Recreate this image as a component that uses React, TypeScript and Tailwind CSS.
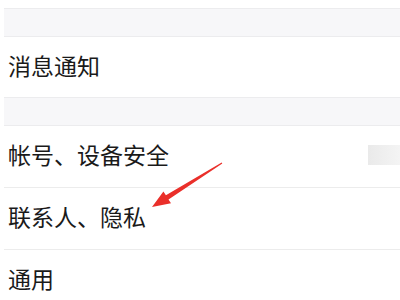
import React from "react";

const FONT = { fontFamily: '"Noto Sans CJK SC", "Noto Sans", sans-serif' };

function Row({ label, h, extra }: { label: string; h: string; extra?: React.ReactNode }) {
  return (
    <div className={`flex items-center justify-between bg-white pl-2 pb-1 ${h}`}>
      <span className="text-[23px] leading-none text-[#1a1a1a]">{label}</span>
      {extra}
    </div>
  );
}

export default function App() {
  return (
    <div className="relative w-[400px] h-[300px] overflow-hidden bg-white" style={FONT}>
      <div className="h-[8px] bg-white" />
      <div className="ml-1 h-[29px] border-y border-[#ececee] bg-[#f7f7f9]" />
      <Row label="消息通知" h="h-[60px]" />
      <div className="ml-1 h-[29px] border-y border-[#ececee] bg-[#f7f7f9]" />
      <Row
        label="帐号、设备安全"
        h="h-[61px]"
        extra={<div className="w-[32px] h-[20px] bg-gradient-to-r from-[#eaeaea] to-[#f4f4f4]" />}
      />
      <div className="ml-1 h-px bg-[#ececec]" />
      <Row label="联系人、隐私" h="h-[61px]" />
      <div className="ml-1 h-px bg-[#ececec]" />
      <Row label="通用" h="h-[60px]" />

      {/* red annotation arrow */}
      <svg className="absolute left-0 top-0" width="400" height="300" viewBox="0 0 400 300">
        <polygon
          points="222.3,163.4 168.5,199.5 171,203.2 152,207 163.4,191.6 165.9,195.3 221.7,162.6"
          fill="#ea2f2a"
        />
      </svg>
    </div>
  );
}
